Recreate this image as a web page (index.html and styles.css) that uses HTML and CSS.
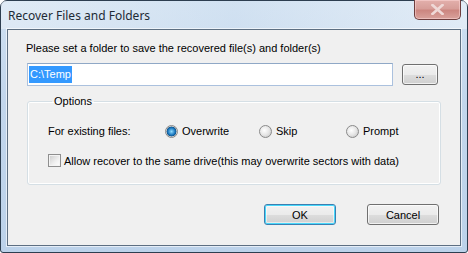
FILE: index.html
```html
<!DOCTYPE html>
<html lang="en">
<head>
    <meta charset="UTF-8">
    <title>Recover Files and Folders</title>
    <link rel="stylesheet" href="styles.css">
</head>
<body>
    <div class="window">
        <!-- Title bar -->
        <div class="titlebar">
            <span class="title">Recover Files and Folders</span>
            <button class="close-btn" title="Close">
                <svg width="13" height="11" viewBox="0 0 13 11">
                    <path d="M1.5 1 L11.5 10 M11.5 1 L1.5 10" stroke="#efd9d7" stroke-width="2.6" stroke-linecap="square"/>
                </svg>
            </button>
        </div>

        <!-- Dialog body -->
        <div class="client">
            <p class="prompt">Please set a folder to save the recovered file(s) and folder(s)</p>
            <div class="path-row">
                <div class="path-input"><span class="selected">C:\Temp</span></div>
                <button class="btn browse">...</button>
            </div>

            <fieldset class="options">
                <legend>Options</legend>
                <div class="existing">
                    <span class="existing-label">For existing files:</span>
                    <label class="radio"><span class="radio-mark checked"></span>Overwrite</label>
                    <label class="radio skip"><span class="radio-mark"></span>Skip</label>
                    <label class="radio"><span class="radio-mark"></span>Prompt</label>
                </div>
                <label class="check"><span class="check-mark"></span>Allow recover to the same drive(this may overwrite sectors with data)</label>
            </fieldset>

            <div class="actions">
                <button class="btn default">OK</button>
                <button class="btn">Cancel</button>
            </div>
        </div>
    </div>
</body>
</html>
```

FILE: styles.css
```css
body {
    margin: 0;
    width: 468px;
    height: 253px;
    overflow: hidden;
    background-color: #ffffff;
}

.window {
    box-sizing: border-box;
    width: 468px;
    height: 253px;
    border: 1px solid #2d3e50;
    border-radius: 7px 7px 3px 3px;
    background: linear-gradient(to bottom, #cfe0f1 0%, #c2d6ec 40%, #bcd2ea 100%);
    padding: 0 6px 6px 6px;
    display: flex;
    flex-direction: column;
}

.titlebar {
    height: 28px;
    display: flex;
    align-items: flex-start;
    justify-content: space-between;
    background: linear-gradient(to right, rgba(255, 255, 255, 0.35), rgba(220, 232, 244, 0.2) 50%, rgba(255, 255, 255, 0.4));
    margin: 0 -6px;
    padding: 0 6px 0 7px;
}

.title {
    font-family: "Noto Sans", sans-serif;
    font-size: 12px;
    color: #1e2a36;
    margin-top: 6px;
}

.close-btn {
    width: 47px;
    height: 20px;
    margin-top: -1px;
    border: 1px solid #6e3e3e;
    border-top: none;
    border-radius: 0 0 5px 5px;
    background: linear-gradient(to bottom, #e3b0ac 0%, #d79e99 45%, #cc8680 55%, #d9a29c 100%);
    box-shadow: inset 0 0 0 1px rgba(255, 220, 220, 0.5);
    display: flex;
    align-items: center;
    justify-content: center;
    padding: 0;
}

.client {
    flex: 1;
    border: 1px solid #5d6f82;
    box-shadow: 0 0 0 1px rgba(255, 255, 255, 0.6);
    background-color: #f0f0f0;
    font-family: "Liberation Sans", sans-serif;
    font-size: 11px;
    color: #000000;
    padding: 0 21px 0 18px;
    display: flex;
    flex-direction: column;
}

.prompt {
    margin: 12px 0 0 0;
    line-height: 13px;
}

.path-row {
    display: flex;
    align-items: center;
    gap: 9px;
    margin-top: 8px;
    margin-left: 1px;
}

.path-input {
    box-sizing: border-box;
    width: 366px;
    height: 23px;
    border: 1px solid #abc1de;
    border-top-color: #8fa8c6;
    background-color: #ffffff;
    padding: 2px 0 0 1px;
}

.selected {
    display: inline-block;
    background-color: #3399ff;
    color: #ffffff;
    line-height: 17px;
    padding: 0 1px;
}

.btn {
    box-sizing: border-box;
    font-family: "Liberation Sans", sans-serif;
    font-size: 11px;
    color: #000000;
    width: 72px;
    height: 21px;
    border: 1px solid #707070;
    border-radius: 3px;
    background: linear-gradient(to bottom, #f2f2f2 0%, #ebebeb 50%, #dddddd 51%, #cfcfcf 100%);
    box-shadow: inset 0 0 0 1px rgba(255, 255, 255, 0.7);
    padding: 0;
}

.browse {
    width: 36px;
    line-height: 11px;
}

.default {
    border-color: #3c7fb1;
    box-shadow: inset 0 0 0 1px #48d8fb, inset 0 0 0 2px rgba(255, 255, 255, 0.5);
}

.options {
    margin: 9px 0 0 1px;
    padding: 16px 0 0 20px;
    height: 72px;
    border: 1px solid #d5dfe5;
    border-radius: 3px;
    box-shadow: inset 0 0 0 1px #ffffff;
}

.options legend {
    padding: 0 2px;
    margin-left: 4px;
}

.existing {
    display: flex;
    align-items: center;
    height: 16px;
}

.existing-label {
    width: 117px;
}

.radio {
    display: flex;
    align-items: center;
    gap: 4px;
    width: 94px;
}

.radio.skip {
    width: 87px;
}

.radio-mark {
    box-sizing: border-box;
    width: 13px;
    height: 13px;
    border-radius: 50%;
    border: 1px solid #8a8a8a;
    background: radial-gradient(circle at 40% 40%, #ffffff 0%, #e6e6e6 50%, #bdbdbd 100%);
}

.radio-mark.checked {
    background: radial-gradient(circle at 50% 50%, #8fdcff 0%, #1b78c0 45%, #0e4f84 62%, #d8d8d8 66%, #f4f4f4 100%);
}

.check {
    display: flex;
    align-items: center;
    gap: 3px;
    margin-top: 15px;
}

.check-mark {
    box-sizing: border-box;
    width: 13px;
    height: 13px;
    border: 1px solid #8f8f8f;
    background: linear-gradient(135deg, #cbcbcb 0%, #f0f0f0 60%, #ffffff 100%);
    box-shadow: inset 0 0 0 1px #f4f4f4;
}

.actions {
    display: flex;
    justify-content: flex-end;
    gap: 31px;
    margin-top: 19px;
}
```
